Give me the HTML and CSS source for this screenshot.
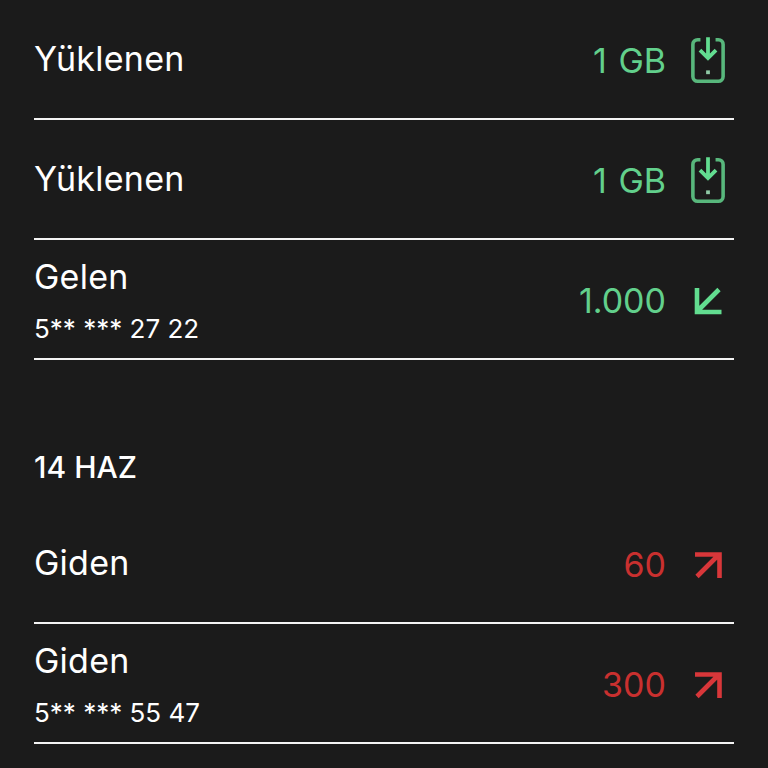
FILE: index.html
```html
<!DOCTYPE html>
<html lang="tr">
<head>
<meta charset="utf-8">
<title>Hareketler</title>
<link rel="stylesheet" href="styles.css">
</head>
<body>
<svg class="defs" width="0" height="0">
  <symbol id="phone" viewBox="0 0 36 50">
    <path d="M10 3.500H7a5 5 0 0 0-5 5v34a5 5 0 0 0 5 5h22a5 5 0 0 0 5-5v-34a5 5 0 0 0-5-5h-3" fill="none" stroke="#58b77c" stroke-width="3.800"/>
    <path d="M18 1v21M9.500 14.500 18 23l8.500-8.500" fill="none" stroke="#62dd90" stroke-width="4"/>
    <rect x="16" y="36" width="4" height="4" fill="#8fc9a5"/>
  </symbol>
  <symbol id="in" viewBox="0 0 28 28">
    <path d="M25 2.500 5 22.500M3 1v24h24.500" fill="none" stroke="#62dd90" stroke-width="4.600"/>
  </symbol>
  <symbol id="out" viewBox="0 0 28 28">
    <path d="M3 25.500 23 5.500M1 3.500h24.500V27" fill="none" stroke="#d8373a" stroke-width="4.600"/>
  </symbol>
</svg>
<main class="list">
  <div class="row">
    <div class="text"><div class="title">Yüklenen</div></div>
    <div class="value green">1 GB</div>
    <div class="icon"><svg class="phone"><use href="#phone"/></svg></div>
  </div>
  <div class="row">
    <div class="text"><div class="title">Yüklenen</div></div>
    <div class="value green">1 GB</div>
    <div class="icon"><svg class="phone"><use href="#phone"/></svg></div>
  </div>
  <div class="row">
    <div class="text"><div class="title">Gelen</div><div class="sub">5** *** 27 22</div></div>
    <div class="value green">1.000</div>
    <div class="icon"><svg class="arrow"><use href="#in"/></svg></div>
  </div>
  <h2 class="date">14 HAZ</h2>
  <div class="row">
    <div class="text"><div class="title">Giden</div></div>
    <div class="value red">60</div>
    <div class="icon"><svg class="arrow"><use href="#out"/></svg></div>
  </div>
  <div class="row">
    <div class="text"><div class="title">Giden</div><div class="sub">5** *** 55 47</div></div>
    <div class="value red">300</div>
    <div class="icon"><svg class="arrow"><use href="#out"/></svg></div>
  </div>
</main>
</body>
</html>
```
FILE: styles.css
```css
html, body {
  margin: 0;
  height: 100%;
  background: #1b1b1b;
  overflow: hidden;
}
body {
  font-family: Inter, "Liberation Sans", sans-serif;
  color: #fff;
}
.defs { position: absolute; }
.list {
  padding: 0 34px;
  display: flex;
  flex-direction: column;
}
.row {
  height: 118px;
  border-bottom: 2px solid #f4f4f4;
  display: flex;
  align-items: center;
}
.text {
  flex: 1;
}
.title {
  font-size: 34px;
  line-height: 40px;
  letter-spacing: 0.25px;
}
.sub {
  font-size: 26px;
  line-height: 32px;
  margin: 16px 0 -4px;
}
.value {
  font-size: 34px;
  line-height: 40px;
  word-spacing: 2px;
  margin-top: 3px;
}
.green { color: #62d08c; }
.red { color: #c9302f; }
.icon {
  width: 48px;
  margin: 2px 2px 0 18px;
  display: flex;
  justify-content: center;
}
.phone { width: 34px; height: 48px; }
.arrow { width: 28px; height: 28px; margin-top: 1px; }
.date {
  margin: 89px 0 0;
  font-size: 30px;
  line-height: 36px;
  font-weight: 500;
  height: 55px;
}
```
